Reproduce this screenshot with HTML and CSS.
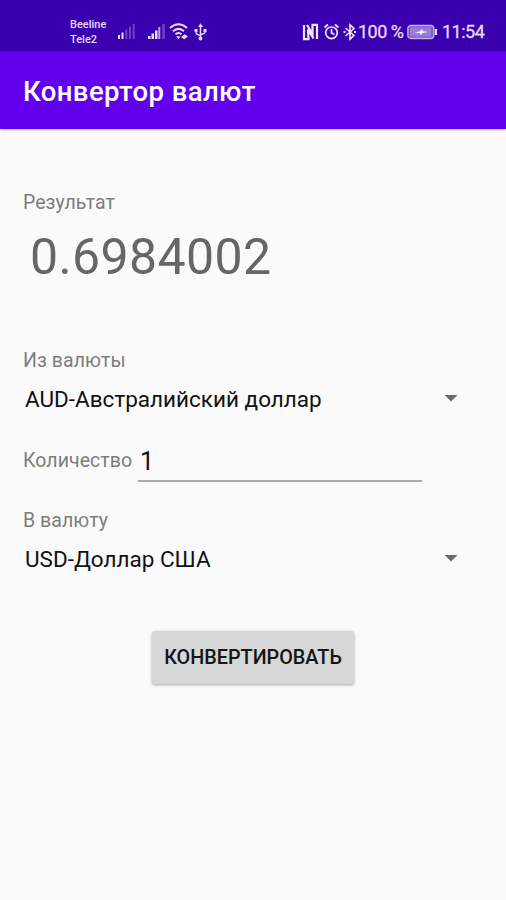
FILE: index.html
```html
<!DOCTYPE html>
<html lang="ru">
<head>
<meta charset="utf-8">
<title>Конвертор валют</title>
<link rel="stylesheet" href="styles.css">
</head>
<body>
<div class="status">
  <div class="carriers"><span>Beeline</span><span>Tele2</span></div>
  <svg class="status-left" width="92" height="20" viewBox="0 0 92 20" fill="#e6dcfa">
    <path d="M1 13h2v4H1zM4.500 10.500h2v6.500h-2z"/>
    <path opacity=".3" d="M8.300 7.500h2V17h-2zM12 4.500h2V17h-2zM15.700 2h2v15h-2z"/>
    <path d="M31 14h2.500v3H31zM34.500 11.500h2.500V17h-2.500zM38 8.500h2.500V17H38z"/><path opacity=".75" d="M41.300 5h2v12h-2z"/>
    <path opacity=".3" d="M45.300 2h2.500v15h-2.500z"/>
    <g transform="translate(1.500 0)"><g fill="none" stroke="#e6dcfa" stroke-width="2"><path d="M51.500 6Q60-1.500 68.500 6M54.500 9.300Q60 4.500 65.500 9.300M57 12.300Q60 9.800 63 12.300"/></g>
    <path d="M57.500 14L60 17l2-2.500zM66 12l3.500 2.500-3.500 2.500zM66 12.500v5L62.500 15z"/></g>
    <g fill="none" stroke="#e6dcfa" stroke-width="1.500"><path d="M83.500 4v13M79 8v2.800q0 1.700 4.500 2.700M88 8v2q0 1.700-4.500 2.500"/></g>
    <path d="M81 5l2.500-3.700L86 5zM77.500 7h3v3h-3zM86.500 7h3v3h-3z"/><circle cx="83.500" cy="16.500" r="1.900"/>
  </svg>
  <svg class="status-mid" width="56" height="20" viewBox="0 0 56 20" fill="none" stroke="#efe8fd" stroke-width="1.700">
    <path stroke-width="2.200" d="M2 3v14M15 3v14M1 17.200h5.500L6 7.500l5.500 9M5 3l5.500 9L10.500 2.800H16"/>
    <circle cx="29.500" cy="10.800" r="5.800"/><path d="M29.500 7v4l3 1.600M22.500 5.500l3.500-3M36.500 5.500l-3.500-3"/>
    <path stroke-width="1.600" d="M43.500 6l8.500 7.500-4 3.700V2.800l4 3.700-8.500 7.500"/><path stroke-width="2" d="M41.500 10h2M52 10h2"/>
  </svg>
  <span class="percent">100 %</span>
  <svg class="battery" width="30" height="16" viewBox="0 0 30 16">
    <rect x=".8" y="1.500" width="26" height="13" rx="3" fill="#7c5acb" stroke="#c1aeea" stroke-width="1.300"/>
    <path fill="#9a7bd9" d="M3 3.500h21v9H3z"/><path fill="#fff" d="M7.500 8.300l5.500-.8 2-2.500.8 2.300 4.700.8-5 1-1.700 2-.9-2z"/><path fill="#eee6fc" d="M27.800 5H30v6h-2.200z"/>
  </svg>
  <span class="clock">11:54</span>
</div>
<header class="appbar"><h1>Конвертор валют</h1></header>
<main class="form">
  <div class="label result-label"><span>Результат</span></div>
  <div class="result"><span>0.6984002</span></div>
  <div class="label from-label"><span>Из валюты</span></div>
  <div class="spinner"><span class="aud">AUD-Австралийский доллар</span><i class="arrow"></i></div>
  <div class="amount"><span class="label amount-label">Количество</span><div class="field">1</div></div>
  <div class="label to-label"><span>В валюту</span></div>
  <div class="spinner"><span class="usd">USD-Доллар США</span><i class="arrow"></i></div>
  <button class="convert"><span>КОНВЕРТИРОВАТЬ</span></button>
</main>
</body>
</html>
```
FILE: styles.css
```css
* { box-sizing: border-box; }
body { margin: 0; height: 900px; background: #fafafa; font-family: Roboto, sans-serif; overflow: hidden; }
svg { display: block; flex: none; }
.status { height: 51px; background: #3a00b0; color: #e6dcfa; display: flex; align-items: flex-start; padding-left: 70px; white-space: nowrap; }
.carriers { width: 47px; padding-top: 17px; font-size: 11px; line-height: 15px; font-weight: 500; display: flex; flex-direction: column; }
.status-left { margin-top: 22px; }
.status-mid { margin: 22px 0 0 93px; }
.percent { width: 49px; font-size: 18px; line-height: 24px; margin-top: 20px; letter-spacing: -.5px; -webkit-text-stroke: .3px; }
.battery { margin-top: 24px; }
.clock { margin: 20px 0 0 5px; font-size: 18px; line-height: 24px; letter-spacing: -.5px; -webkit-text-stroke: .3px; }
.appbar { height: 78px; background: #6200ee; padding: 24px 23px 0; box-shadow: 0 1px 2px #0004; }
h1 { margin: 0; color: #fff; font-size: 27.5px; line-height: 34px; font-weight: 500; letter-spacing: .4px; }
.form { padding: 62px 23px 0; display: flex; flex-direction: column; }
.label { color: #7d7d7d; font-size: 19.5px; line-height: 24px; letter-spacing: .05px; }
.result { height: 60px; margin-top: 12px; padding-left: 7px; color: #666; font-size: 50px; line-height: 60px; letter-spacing: .4px; }
.from-label { margin-top: 62px; }
.spinner { height: 30px; margin-top: 11px; padding: 0 25px 0 2px; display: flex; justify-content: space-between; align-items: center; color: #111; font-size: 22.5px; line-height: 30px; }
.spinner span { margin-top: -1px; }
.arrow { width: 14px; height: 7px; margin-top: -2px; background: #6b6b6b; clip-path: polygon(0 0, 100% 0, 50% 100%); }
.amount { height: 42px; margin-top: 26px; display: flex; align-items: flex-start; }
.amount-label { width: 115px; padding-top: 9px; }
.field { width: 284px; height: 42px; padding: 6px 0 0 2px; border-bottom: 2px solid #aaa; color: #111; font-size: 25px; line-height: 32px; }
.to-label { margin-top: 27px; }
.convert { align-self: center; width: 202px; height: 53px; margin-top: 57px; padding: 0; border: 0; border-radius: 3px; background: #d6d8d7; box-shadow: 0 1px 3px #0005; color: #151515; font: 500 19.800px/24px Roboto, sans-serif; white-space: nowrap; }
```
